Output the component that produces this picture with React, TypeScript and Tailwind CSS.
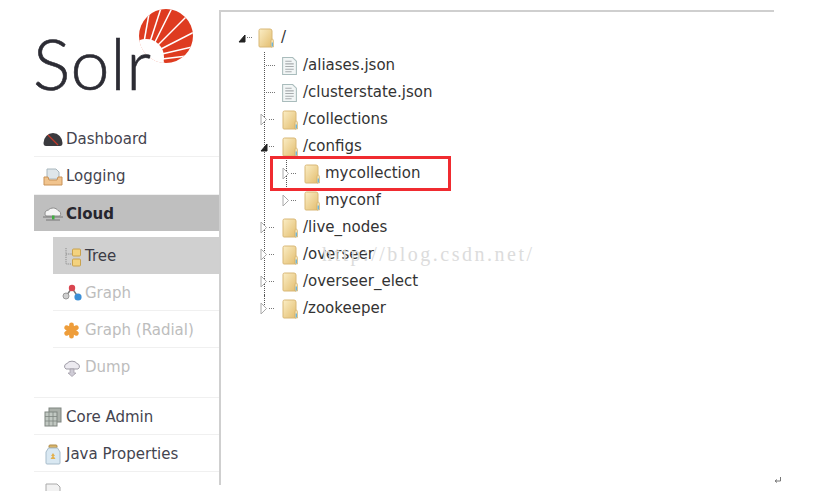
import React from "react";

function SolrSun() {
  // rays fan out from a point just below-left of the disc
  const rays = [
    [144, 42, 150, 8],
    [150, 42, 162, 5],
    [155, 42, 172, 8],
    [158, 45, 186, 17],
    [161, 49, 196, 31],
    [162, 54, 196, 46],
    [162, 59, 196, 55],
  ];
  return (
    <svg viewBox="0 0 200 70" className="w-[200px] h-[70px]">
      <defs>
        <clipPath id="sun">
          <circle cx="166" cy="36" r="27" />
        </clipPath>
      </defs>
      <g clipPath="url(#sun)">
        <rect x="130" y="0" width="70" height="70" fill="#de3b20" />
        <circle cx="146" cy="57" r="18" fill="#fff" />
        <path d="M130 40 L144 41 L163 60 L168 70 L130 70Z" fill="#fff" />
        {rays.map((r, i) => (
          <line key={i} x1={r[0]} y1={r[1]} x2={r[2]} y2={r[3]} stroke="#fff" strokeWidth="1.5" />
        ))}
      </g>
    </svg>
  );
}

function Folder() {
  return (
    <svg viewBox="0 0 16 20" className="w-[16px] h-[20px] shrink-0">
      <defs>
        <linearGradient id="fold" x1="0" y1="0" x2="1" y2="1">
          <stop offset="0" stopColor="#fbeec6" />
          <stop offset="1" stopColor="#e3bd6e" />
        </linearGradient>
      </defs>
      <path d="M1 2.500 Q1 1 2.500 1 H12 Q14 1 14 3 V19 H2 Q1 19 1 18Z" fill="url(#fold)" stroke="#d9b877" strokeWidth="1" />
      <path d="M14 11 Q15.500 11 15.500 13 V19 H13 V13 Q13 11 14 11Z" fill="#f3e3b5" stroke="#cfa95f" strokeWidth="0.6" />
      <rect x="13.600" y="14.500" width="1.400" height="4" fill="#6fb4d8" />
    </svg>
  );
}

function DocIcon() {
  return (
    <svg viewBox="0 0 14 17" className="w-[15px] h-[18px] shrink-0">
      <path d="M.5.5H10L13.500 4V16.500H.5Z" fill="#f2f6f6" stroke="#a9bcbc" />
      <path d="M3 4h6M3 6.500h8M3 9h8M3 11.500h8M3 14h6" stroke="#a8acae" strokeWidth="1" />
    </svg>
  );
}

function Toggle({ open }: { open?: boolean }) {
  return (
    <svg viewBox="0 0 14 13" className="w-[14px] h-[13px] shrink-0">
      {open ? (
        <path d="M1 11 L7 11 L7 4Z" fill="#222" stroke="#222" />
      ) : (
        <path d="M1 1 L1 12 L6.500 6.500Z" fill="#fff" stroke="#aaa" />
      )}
      <path d="M9 6.500h5" stroke="#777" strokeDasharray="1 1" />
    </svg>
  );
}

function TreeRow({ kind, label, open }: { kind: "file" | "dir"; label: string; open?: boolean }) {
  return (
    <div className="h-[27px] flex items-center">
      {kind === "file" ? (
        <>
          <span className="w-[9px] ml-[1px] mr-[6px] border-t border-dotted border-[#777] shrink-0" />
          <span className="ml-[1px] mr-[1px] flex">
            <DocIcon />
          </span>
        </>
      ) : (
        <>
          <span className="-ml-[5px] mr-[8px] flex">
            <Toggle open={open} />
          </span>
          <Folder />
        </>
      )}
      <span className="ml-[5px] text-[15px] text-[#333] whitespace-nowrap">{label}</span>
    </div>
  );
}

function NavIcon({ name }: { name: string }) {
  switch (name) {
    case "dashboard":
      return (
        <svg viewBox="0 0 20 14" className="w-[20px] h-[14px]">
          <path d="M.5 11 A9.500 10 0 0 1 19.500 11 Q19.500 14 17 14 H3 Q.5 14 .5 11Z" fill="#3a3a3e" />
          <path d="M5 3 L15 13" stroke="#c0392b" strokeWidth="1.3" />
        </svg>
      );
    case "logging":
      return (
        <svg viewBox="0 0 20 18" className="w-[20px] h-[18px]">
          <path d="M4 1h9l3 3v7H4Z" fill="#dfe6ea" stroke="#a8b6bd" />
          <path d="M1 9h4l1 3h8l1-3h4v8H1Z" fill="#f1c48e" stroke="#c99358" />
        </svg>
      );
    case "cloud":
      return (
        <svg viewBox="0 0 20 15" className="w-[20px] h-[15px]">
          <path d="M3 9 A3.500 3.500 0 0 1 5.500 3 A5.500 4.500 0 0 1 15 3.500 A3.500 3.500 0 0 1 17 9Z" fill="#f5f5f5" stroke="#8d8d8d" />
          <path d="M0 10h20" stroke="#777" />
          <rect x="9" y="8.500" width="2.500" height="4" fill="#3fae3f" />
          <path d="M3 13h14" stroke="#777" />
        </svg>
      );
    case "tree":
      return (
        <svg viewBox="0 0 18 20" className="w-[18px] h-[20px]">
          <path d="M2 1v16h6M2 7h6" stroke="#8a8a8a" strokeDasharray="1.2 1" fill="none" />
          <rect x="8.500" y="2" width="8" height="7" rx="1" fill="#f3d27e" stroke="#c9a24f" />
          <rect x="8.500" y="12" width="8" height="7" rx="1" fill="#f3d27e" stroke="#c9a24f" />
        </svg>
      );
    case "graph":
      return (
        <svg viewBox="0 0 20 18" className="w-[20px] h-[18px]">
          <path d="M4 12 L10 4 L16 13" stroke="#777" fill="none" strokeWidth="1.4" />
          <circle cx="10" cy="4" r="3.200" fill="#d9454f" />
          <circle cx="4" cy="12" r="3" fill="#cfcfcf" stroke="#999" />
          <circle cx="16" cy="13" r="3.600" fill="#3b8fd6" />
        </svg>
      );
    case "radial":
      return (
        <svg viewBox="0 0 18 18" className="w-[17px] h-[17px]">
          <path d="M9 3v12M3.800 6l10.400 6M14.200 6l-10.400 6" stroke="#ee9d3a" strokeWidth="5" strokeLinecap="round" />
        </svg>
      );
    case "dump":
      return (
        <svg viewBox="0 0 20 18" className="w-[20px] h-[18px]">
          <path d="M4 10 A3 3 0 0 1 5 4.500 A5.500 4 0 0 1 15 4.500 A3 3 0 0 1 16 10Z" fill="#eceaf0" stroke="#9d9aa5" />
          <path d="M8 10v4H6l4 3.500 4-3.500h-2v-4Z" fill="#cfccd6" stroke="#9d9aa5" strokeWidth=".7" />
        </svg>
      );
    case "core":
      return (
        <svg viewBox="0 0 18 20" className="w-[18px] h-[20px]">
          <rect x="5" y="1" width="12" height="14" fill="#aab0aa" stroke="#7f8580" />
          <rect x="1" y="5" width="12" height="14" fill="#c1c8c2" stroke="#7f8580" />
          <path d="M1 9.500h12M1 14h12M5 5v14M9 5v14" stroke="#7f8580" strokeWidth=".8" />
        </svg>
      );
    case "java":
      return (
        <svg viewBox="0 0 16 21" className="w-[16px] h-[21px]">
          <rect x="4" y="1" width="8" height="3" rx="1" fill="#d8b46a" stroke="#b08d4a" />
          <path d="M3.500 4h9L15 8v11q0 1-1 1H2q-1 0-1-1V8Z" fill="#d9e8f2" stroke="#a7bccb" />
          <path d="M8 9l2 3h-1.500l2 3H5.500l2-3H6Z" fill="#e2b04e" />
        </svg>
      );
    default:
      return (
        <svg viewBox="0 0 20 18" className="w-[20px] h-[18px]">
          <path d="M3 1h11l3 3v13H3Z" fill="#f2f2f2" stroke="#aaa" />
        </svg>
      );
  }
}

function NavItem({
  icon,
  label,
  dim,
  last,
  tall,
}: {
  icon: string;
  label: string;
  dim?: boolean;
  last?: boolean;
  tall?: boolean;
}) {
  return (
    <div
      className={
        (tall ? "h-[38px] " : "h-[37px] ") +
        "pt-[2px] flex items-center " +
        (last ? "" : "border-b border-[#f0f0f0]")
      }
    >
      <span className="w-[32px] pl-[5px] flex justify-center shrink-0">
        <NavIcon name={icon} />
      </span>
      <span className={"text-[15px] whitespace-nowrap " + (dim ? "text-[#bdbdbd]" : "text-[#44444f]")}>
        {label}
      </span>
    </div>
  );
}

export default function App() {
  return (
    <div
      className="relative w-[839px] h-[491px] overflow-hidden bg-white flex"
      style={{ fontFamily: '"DejaVu Sans", Verdana, sans-serif' }}
    >
      <aside className="w-[219px] shrink-0 pl-[34px]">
        <div className="relative h-[120px] -ml-[34px]">
          <SolrSun />
          <span
            className="absolute left-[33px] top-[23px] text-[70px] leading-[80px] font-light text-[#2c2c34] tracking-[0.5px] [-webkit-text-stroke:0.6px_#2c2c34]"
            style={{ fontFamily: "Lato, sans-serif" }}
          >
            Solr
          </span>
        </div>
        <nav>
          <NavItem icon="dashboard" label="Dashboard" />
          <NavItem icon="logging" label="Logging" tall />
          <div className="h-[36px] pt-[2px] flex items-center bg-[#bfbfbf]">
            <span className="w-[32px] pl-[5px] flex justify-center shrink-0">
              <NavIcon name="cloud" />
            </span>
            <span className="text-[15px] font-bold text-[#26262e]">Cloud</span>
          </div>
          <div className="pl-[19px] pt-[6px] pb-[12px]">
            <div className="h-[37px] pt-[2px] flex items-center bg-[#d0d0d0]">
              <span className="w-[30px] pl-[10px] flex justify-center shrink-0">
                <NavIcon name="tree" />
              </span>
              <span className="ml-[2px] text-[15px] text-[#3b3b45]">Tree</span>
            </div>
            <NavItem icon="graph" label="Graph" dim />
            <NavItem icon="radial" label="Graph (Radial)" dim />
            <NavItem icon="dump" label="Dump" dim last />
          </div>
          <div className="border-t border-[#f0f0f0]">
            <NavItem icon="core" label="Core Admin" />
            <NavItem icon="java" label="Java Properties" />
            <NavItem icon="doc" label="" last />
          </div>
        </nav>
      </aside>

      <main className="mt-[10px] w-[555px] h-[475px] border-l-2 border-t-2 border-[#cfcfcf] pl-[17px] pt-[12px]">
        <div className="h-[27px] flex items-center">
          <span className="mr-[6px] flex">
            <Toggle open />
          </span>
          <Folder />
          <span className="ml-[7px] text-[15px] text-[#333]">/</span>
        </div>
        <div className="mt-[1px] ml-[26px] border-l border-dotted border-[#555]">
          <TreeRow kind="file" label="/aliases.json" />
          <TreeRow kind="file" label="/clusterstate.json" />
          <TreeRow kind="dir" label="/collections" />
          <TreeRow kind="dir" label="/configs" open />
          <div className="ml-[21px] border-l border-dotted border-[#555]">
            <TreeRow kind="dir" label="mycollection" />
          </div>
          <div className="ml-[21px] border-l border-transparent">
            <TreeRow kind="dir" label="myconf" />
          </div>
          <TreeRow kind="dir" label="/live_nodes" />
          <TreeRow kind="dir" label="/overseer" />
          <TreeRow kind="dir" label="/overseer_elect" />
        </div>
        <div className="ml-[26px] flex">
          <span className="h-[14px] border-l border-dotted border-[#555]" />
          <TreeRow kind="dir" label="/zookeeper" />
        </div>
      </main>

      {/* overlays from the annotated screenshot */}
      <div className="absolute left-[270px] top-[156px] w-[181px] h-[35px] border-[3px] border-[#f02b30]" />
      <span
        className="absolute left-[322px] top-[241px] text-[20px] leading-[26px] tracking-[2.5px] text-[#dcdcdc] whitespace-nowrap"
        style={{ fontFamily: '"Liberation Serif", serif' }}
      >
        http://blog.csdn.net/
      </span>
      <svg viewBox="0 0 8 7" className="absolute left-[774px] top-[477px] w-[8px] h-[7px]">
        <path d="M6.500 0v4H1.500M3 2.500 1 4l2 1.500" fill="none" stroke="#777" />
      </svg>
    </div>
  );
}
